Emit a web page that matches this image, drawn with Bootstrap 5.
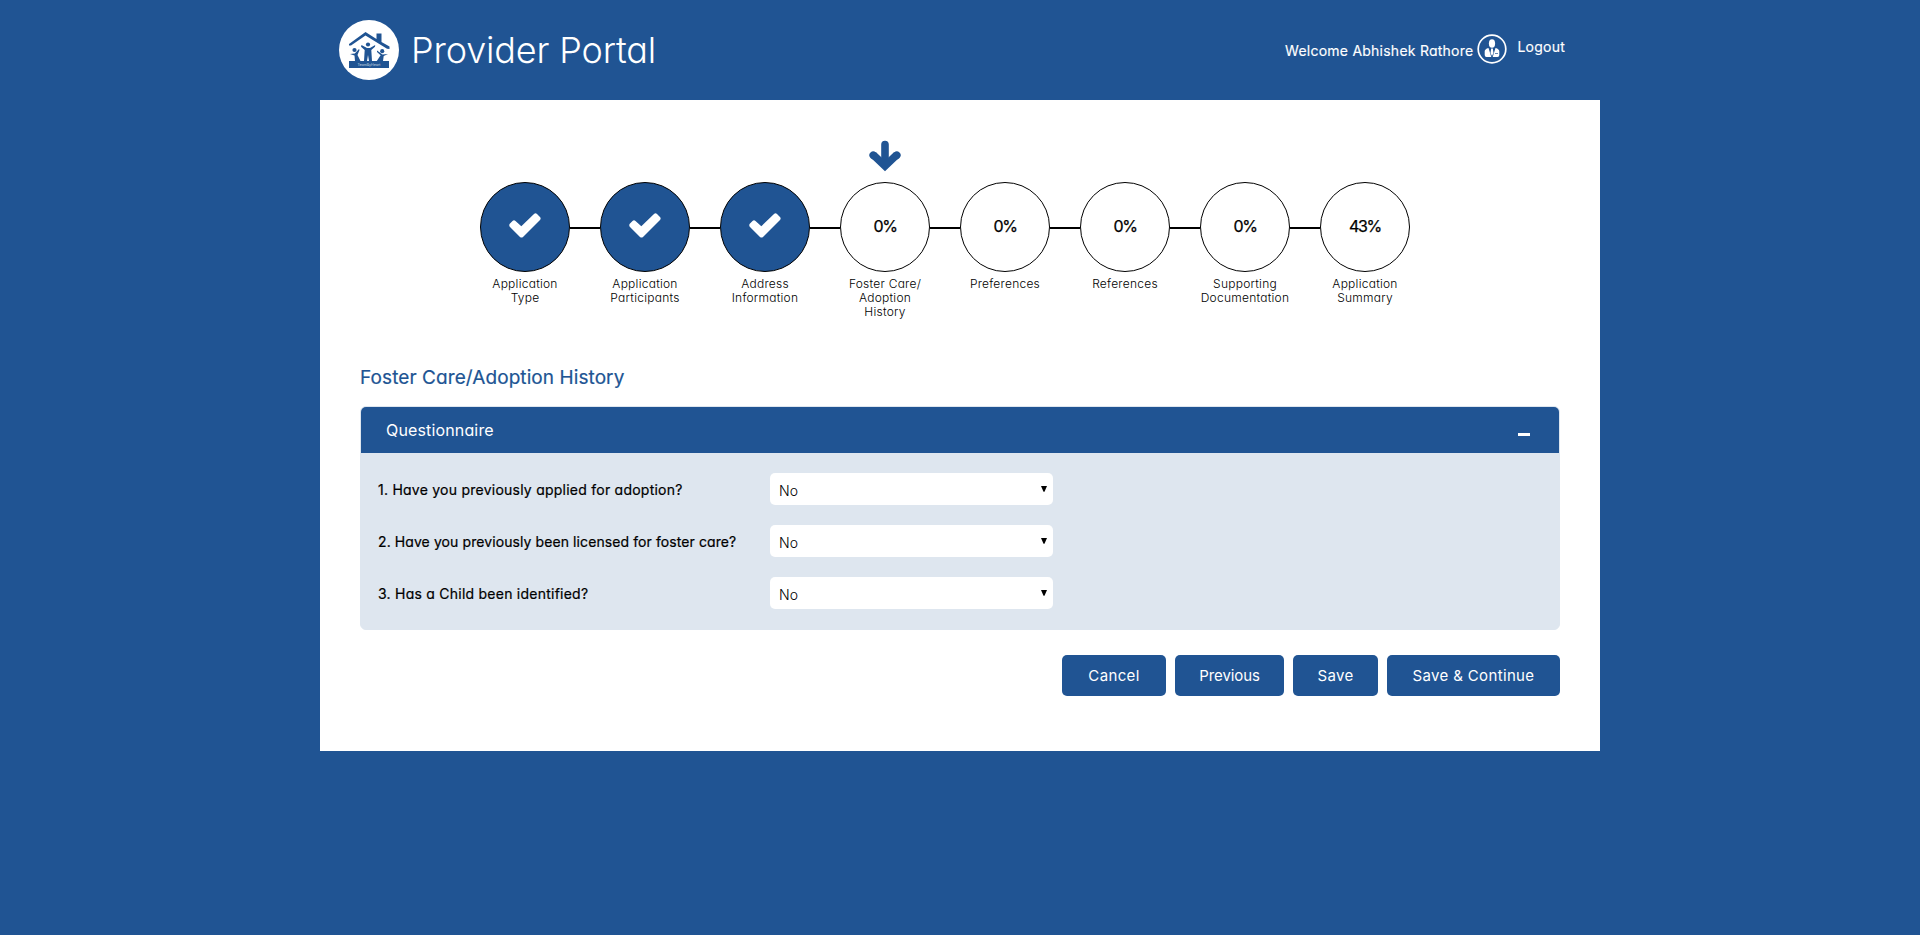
<!DOCTYPE html>
<html lang="en">
<head>
<meta charset="utf-8">
<meta name="viewport" content="width=device-width, initial-scale=1">
<title>Provider Portal</title>
<link href="https://cdn.jsdelivr.net/npm/bootstrap@5.3.0/dist/css/bootstrap.min.css" rel="stylesheet">
<style>
:root{--brand:#205493;--pale:#dee6ef}
body{background:var(--brand);font-family:Inter,"Open Sans",sans-serif;font-feature-settings:"cv11";color:#000;min-height:100vh}
.shell{width:1280px}
.topbar{height:100px;padding:0 35px 0 19px}
.title{font-size:36px;font-weight:300;line-height:1;letter-spacing:-.15px;margin-left:12px}
.user{font-size:14px;font-weight:400;line-height:20px;letter-spacing:.24px;padding-bottom:3px;-webkit-text-stroke:.15px}
.welcome{padding-top:5px}
.logout{margin-left:10px;padding-bottom:3px}
.sheet{height:651px;padding:40px}
.steps{height:226px;padding-left:120px}
.step{width:120px;position:relative}
.pointer{height:42px}
.disc{width:90px;height:90px;border:1px solid #000;border-radius:50%;background:#fff;font-size:16px;font-weight:400;-webkit-text-stroke:.25px;letter-spacing:-1.3px;padding-bottom:3px}
.disc.done{background:var(--brand);padding-bottom:3px}
.step:not(:last-child)::after{content:"";position:absolute;left:90px;top:87px;width:30px;height:2px;background:#000}
.stepbox{width:90px}
.caption{font-size:12px;font-weight:300;line-height:14px;letter-spacing:.25px;margin:5px -8px 0}
.heading{font-size:19px;font-weight:400;-webkit-text-stroke:.2px;line-height:24px;letter-spacing:.08px;color:var(--brand);margin:0 0 16px}
.panel{height:224px;background:var(--pale);border:1px solid var(--pale);border-radius:6px;overflow:hidden}
.panel-top{height:46px;background:var(--brand);padding:0 29px 0 25px;font-size:16px;letter-spacing:.15px}
.dash{width:12px;height:3px;background:#fff;margin-top:9px}
.questions{padding:20px 0 0 17px}
.question{height:32px;margin-bottom:20px}
.ask{width:392px;font-size:14px;font-weight:400;-webkit-text-stroke:.2px;letter-spacing:.24px}
.ask.long{letter-spacing:.09px}
.pick{width:283px;height:32px;border:0;border-radius:5px;font-size:14px;font-weight:300;line-height:20px;padding:5px 30px 1px 9px;color:#000;background:#fff url("data:image/svg+xml,%3Csvg xmlns='http://www.w3.org/2000/svg' viewBox='0 0 6 6'%3E%3Cpath d='M0 0h6L3.5 5.700h-1z'/%3E%3C/svg%3E") no-repeat right 6px top 13px/6px 6px;appearance:none}
.actions{gap:9px;margin-top:25px}
.act{height:41px;background:var(--brand);color:#fff;border:0;border-radius:5px;font-size:15px;padding:1px 0 0;line-height:20px;letter-spacing:.35px}
.act.snug{letter-spacing:-.1px}
.w-cancel{width:104px}.w-prev{width:109px}.w-save{width:85px}.w-cont{width:173px}
</style>
</head>
<body>
<svg class="d-none">
  <symbol id="check" viewBox="0 0 32 25"><path fill="#fff" d="M1 10.500 3.500 8q1.500-1.300 3 0L12.300 13.300 25 .9q1.500-1.300 3 0l3 3q1.300 1.500 0 3L14 23.900q-1.500 1.400-3 0L1 14q-1.500-1.800 0-3.500z"/></symbol>
</svg>
<div class="shell mx-auto">
  <header class="topbar d-flex align-items-center justify-content-between text-white">
    <div class="d-flex align-items-center">
      <svg width="60" height="60" viewBox="0 0 60 60" aria-hidden="true">
        <circle cx="30" cy="30" r="30" fill="#fff"/>
        <g fill="#205493">
          <path d="M10 24 26.500 12 37.500 19V13.500H42.500V22L50.500 26.500V29L48 28.700 26.500 15.500 12 25.500H10z"/>
          <circle cx="29" cy="24.500" r="2.100"/><circle cx="15.500" cy="30" r="2.100"/><circle cx="43.200" cy="31.200" r="2.100"/>
          <path d="M22.500 25 28 28h3l5.200-3-.2 1.800-3.700 3.200L33 41h-3l-1-6-1 6h-3l.7-11-3.700-3.200z"/>
          <path d="M11 34l4.800-.5 4.200-4.500.5 1-2 5L21.500 41H16l-.5-5.500zM49 34l-5.500.5L38 30.500v1.400l3.600 3.400L37.800 41H44l.7-5z"/>
          <path d="M10 41h40v7H10z"/>
        </g>
        <text x="30" y="45.800" text-anchor="middle" font-size="3.500" fill="#fff" fill-opacity=".75">TeamByHeart</text>
      </svg>
      <span class="title">Provider Portal</span>
    </div>
    <div class="user d-flex align-items-center">
      <span class="welcome">Welcome Abhishek Rathore</span>
      <svg class="ms-1" width="30" height="30" viewBox="0 0 30 30" aria-hidden="true">
        <circle cx="15" cy="15" r="13.800" fill="none" stroke="#fff" stroke-width="1.700"/>
        <g fill="#fff"><ellipse cx="15" cy="9.500" rx="3.100" ry="4.300"/>
        <path d="M11.500 14 14.300 23H9.500q-1.800 0-1.800-2v-3.500q0-2.500 3.800-3.500zM18.500 14 15.700 23h4.800q1.800 0 1.800-2v-3.500q0-2.500-3.800-3.500zM14.200 14.500h1.600l.7 4.500-1.500 3-1.500-3z"/></g>
        <path d="M18 19.500h3" stroke="#205493" stroke-width=".7"/>
      </svg>
      <span class="logout">Logout</span>
    </div>
  </header>

  <main class="sheet bg-white">
    <div class="steps d-flex text-center">
      <div class="step"><div class="stepbox"><div class="pointer"></div><div class="disc done d-flex align-items-center justify-content-center"><svg width="32" height="25"><use href="#check"/></svg></div><div class="caption">Application<br>Type</div></div></div>
      <div class="step"><div class="stepbox"><div class="pointer"></div><div class="disc done d-flex align-items-center justify-content-center"><svg width="32" height="25"><use href="#check"/></svg></div><div class="caption">Application<br>Participants</div></div></div>
      <div class="step"><div class="stepbox"><div class="pointer"></div><div class="disc done d-flex align-items-center justify-content-center"><svg width="32" height="25"><use href="#check"/></svg></div><div class="caption">Address<br>Information</div></div></div>
      <div class="step"><div class="stepbox"><div class="pointer"><svg class="d-block mx-auto" width="32" height="32" viewBox="0 0 32 32" fill="none" stroke="#205493" stroke-width="7.600"><path stroke-linecap="round" d="M16 4.500V23M4.200 15.200l.3.300M27.800 15.200l-.3.300"/><path d="M4.200 14.800 16 26.100 27.800 14.800"/></svg></div><div class="disc d-flex align-items-center justify-content-center">0%</div><div class="caption">Foster Care/<br>Adoption<br>History</div></div></div>
      <div class="step"><div class="stepbox"><div class="pointer"></div><div class="disc d-flex align-items-center justify-content-center">0%</div><div class="caption">Preferences</div></div></div>
      <div class="step"><div class="stepbox"><div class="pointer"></div><div class="disc d-flex align-items-center justify-content-center">0%</div><div class="caption">References</div></div></div>
      <div class="step"><div class="stepbox"><div class="pointer"></div><div class="disc d-flex align-items-center justify-content-center">0%</div><div class="caption">Supporting<br>Documentation</div></div></div>
      <div class="step"><div class="stepbox"><div class="pointer"></div><div class="disc d-flex align-items-center justify-content-center">43%</div><div class="caption">Application<br>Summary</div></div></div>
    </div>

    <h1 class="heading">Foster Care/Adoption History</h1>
    <section class="panel">
      <div class="panel-top d-flex align-items-center justify-content-between text-white">
        <span>Questionnaire</span><span class="dash"></span>
      </div>
      <div class="questions">
        <div class="question d-flex align-items-center"><label class="ask" for="q1">1. Have you previously applied for adoption?</label><select class="pick" id="q1"><option>No</option><option>Yes</option></select></div>
        <div class="question d-flex align-items-center"><label class="ask long" for="q2">2. Have you previously been licensed for foster care?</label><select class="pick" id="q2"><option>No</option><option>Yes</option></select></div>
        <div class="question d-flex align-items-center"><label class="ask" for="q3">3. Has a Child been identified?</label><select class="pick" id="q3"><option>No</option><option>Yes</option></select></div>
      </div>
    </section>
    <div class="actions d-flex justify-content-end">
      <button type="button" class="btn act w-cancel">Cancel</button>
      <button type="button" class="btn act snug w-prev">Previous</button>
      <button type="button" class="btn act w-save">Save</button>
      <button type="button" class="btn act w-cont">Save &amp; Continue</button>
    </div>
  </main>
</div>
<script src="https://cdn.jsdelivr.net/npm/bootstrap@5.3.0/dist/js/bootstrap.bundle.min.js"></script>
</body>
</html>
